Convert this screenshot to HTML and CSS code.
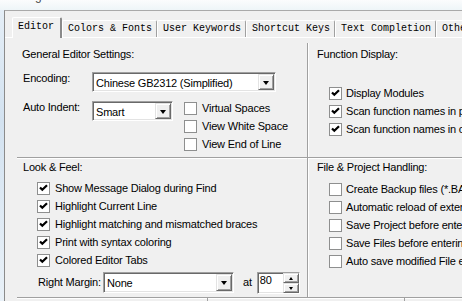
FILE: index.html
```html
<!DOCTYPE html>
<html lang="en">
<head>
    <meta charset="UTF-8">
    <title>Editor Options</title>
    <link rel="stylesheet" href="styles.css">
</head>
<body>
    <svg class="defs" width="0" height="0">
        <symbol id="box" viewBox="0 0 13 13">
            <rect x="0.5" y="0.5" width="12" height="12" fill="#fff" stroke="#8e8f8f"/>
        </symbol>
        <symbol id="tick" viewBox="0 0 13 13">
            <rect x="0.5" y="0.5" width="12" height="12" fill="#fff" stroke="#8e8f8f"/>
            <path d="M3 5.5L5.3 7.8L10 3.2" fill="none" stroke="#000" stroke-width="2.2"/>
        </symbol>
    </svg>
    <div class="glass"><span class="title">g</span></div>
    <div class="frame">
        <ul class="tabs">
            <li class="tab on">Editor</li>
            <li class="tab">Colors &amp; Fonts</li>
            <li class="tab">User Keywords</li>
            <li class="tab">Shortcut Keys</li>
            <li class="tab">Text Completion</li>
            <li class="tab">Other</li>
        </ul>
        <div class="page">
            <div class="general">
                <h3>General Editor Settings:</h3>
                <div class="line">
                    <span class="lbl">Encoding:</span>
                    <div class="field enc"><span class="val">Chinese GB2312 (Simplified)</span><span class="drop"></span></div>
                </div>
                <div class="line indent">
                    <span class="lbl">Auto Indent:</span>
                    <div class="field sm"><span class="val">Smart</span><span class="drop"></span></div>
                    <div class="checks side">
                        <label class="chk"><svg><use href="#box"/></svg>Virtual Spaces</label>
                        <label class="chk"><svg><use href="#box"/></svg>View White Space</label>
                        <label class="chk"><svg><use href="#box"/></svg>View End of Line</label>
                    </div>
                </div>
            </div>
            <div class="func">
                <h3>Function Display:</h3>
                <div class="checks list">
                    <label class="chk"><svg><use href="#tick"/></svg>Display Modules</label>
                    <label class="chk"><svg><use href="#tick"/></svg>Scan function names in project</label>
                    <label class="chk"><svg><use href="#tick"/></svg>Scan function names in current file</label>
                </div>
            </div>
            <div class="look">
                <h3>Look &amp; Feel:</h3>
                <div class="checks list">
                    <label class="chk"><svg><use href="#tick"/></svg>Show Message Dialog during Find</label>
                    <label class="chk"><svg><use href="#tick"/></svg>Highlight Current Line</label>
                    <label class="chk"><svg><use href="#tick"/></svg>Highlight matching and mismatched braces</label>
                    <label class="chk"><svg><use href="#tick"/></svg>Print with syntax coloring</label>
                    <label class="chk"><svg><use href="#tick"/></svg>Colored Editor Tabs</label>
                </div>
                <div class="margin">
                    <span class="lbl">Right Margin:</span>
                    <div class="field wide"><span class="val">None</span><span class="drop"></span></div>
                    <span class="at">at</span>
                    <div class="field spin">
                        <span class="val">80</span>
                        <span class="arrows"><span class="up"></span><span class="down"></span></span>
                    </div>
                </div>
            </div>
            <div class="file">
                <h3>File &amp; Project Handling:</h3>
                <div class="checks list">
                    <label class="chk"><svg><use href="#box"/></svg>Create Backup files (*.BAK)</label>
                    <label class="chk"><svg><use href="#box"/></svg>Automatic reload of externally modified files</label>
                    <label class="chk"><svg><use href="#box"/></svg>Save Project before entering Debug mode</label>
                    <label class="chk"><svg><use href="#box"/></svg>Save Files before entering Debug mode</label>
                    <label class="chk"><svg><use href="#box"/></svg>Auto save modified File every</label>
                </div>
            </div>
            <div class="next">
                <span class="cell one"></span>
                <span class="cell two"></span>
            </div>
        </div>
    </div>
</body>
</html>
```
FILE: styles.css
```css
*{
    margin: 0;
    padding: 0;
    box-sizing: border-box;
}
html,body{
    width: 462px;
    height: 301px;
    overflow: hidden;
}
body{
    background: linear-gradient(180deg,#e6eff7 0,#d3e2f0 40%,#e9f1f8 100%);
    font: 11px/13px "Liberation Sans", Arial, sans-serif;
    letter-spacing: -0.2px;
    color: #000;
    white-space: nowrap;
}
.defs{
    position: absolute;
}
.glass{
    height: 10px;
    overflow: hidden;
    padding-left: 35px;
    background: linear-gradient(180deg,#fbfcfd,#eef5f8);
}
.title{
    display: block;
    font-size: 12px;
    line-height: 12px;
    margin-top: -10px;
    color: #4a4a4a;
}
.frame{
    margin-left: 4px;
    height: 291px;
    border-left: 1px solid #8b8b8b;
    border-top: 1px solid #a9a9a9;
    background: #f0f0f0;
}
.tabs{
    display: flex;
    align-items: flex-end;
    list-style: none;
    height: 26px;
    padding: 6px 0 0 7px;
}
.tab{
    flex: none;
    height: 17px;
    padding: 0 4px 0 5px;
    border: 1px solid #fff;
    border-bottom: 0;
    border-right-color: #a0a0a0;
    border-radius: 2px 2px 0 0;
    font: 10px/15px "Liberation Mono", monospace;
    letter-spacing: 0;
}
.tab.on{
    height: 21px;
    margin-bottom: -1px;
    padding: 0 6px 0 5px;
    border-right: 2px solid #8a8a8a;
    background: #f0f0f0;
    line-height: 17px;
}
.page{
    height: 265px;
    border-top: 1px solid #fff;
    padding-left: 12px;
    display: grid;
    grid-template-columns: 290px 1fr;
    grid-template-rows: 119px 141px 1fr;
}
h3{
    font-weight: normal;
    font-size: 11px;
}
.general{
    padding: 10px 0 0 5px;
}
.line{
    display: flex;
    align-items: flex-start;
    margin-top: 11px;
    padding-left: 1px;
}
.line.indent{
    margin-top: 9px;
}
.lbl{
    width: 69px;
}
.field{
    display: flex;
    height: 20px;
    padding: 1px;
    background: #fff;
    border: 1px solid;
    border-color: #a0a0a0 #fff #fff #a0a0a0;
    box-shadow: inset 1px 1px #696969, inset -1px -1px #e3e3e3;
}
.val{
    flex: 1;
    padding: 3px 0 0 2px;
}
.enc{
    width: 184px;
}
.sm{
    width: 81px;
}
.drop{
    width: 16px;
    display: flex;
    align-items: center;
    justify-content: center;
    background: #f0f0f0;
    border: 1px solid;
    border-color: #e3e3e3 #696969 #696969 #e3e3e3;
    box-shadow: inset 1px 1px #fff, inset -1px -1px #a0a0a0;
}
.drop::after{
    content: "";
    border-top: 4px solid #000;
    border-left: 3.5px solid transparent;
    border-right: 3.5px solid transparent;
    margin-top: 1px;
}
.checks.side{
    margin: 1px 0 0 11px;
}
.chk{
    display: flex;
    gap: 5px;
    height: 18px;
}
.chk svg{
    flex: none;
    width: 13px;
    height: 13px;
}
.func{
    margin-top: 5px;
    padding: 5px 0 0 9px;
    border-left: 1px solid #a0a0a0;
    box-shadow: inset 1px 0 #fff;
}
.func .list{
    margin-top: 26px;
    padding-left: 12px;
}
.func .chk{
    gap: 4px;
}
.look{
    padding: 3px 0 0 6px;
    border-top: 1px solid #a0a0a0;
    border-bottom: 1px solid #a0a0a0;
    box-shadow: inset 0 1px #fff;
}
.look .list{
    margin-top: 8px;
    padding-left: 14px;
}
.margin{
    display: flex;
    align-items: center;
    margin-top: -2px;
    padding-left: 15px;
}
.margin .lbl{
    width: 65px;
}
.wide{
    width: 131px;
    height: 21px;
}
.at{
    margin: 0 5px 0 9px;
}
.spin{
    width: 43px;
    height: 22px;
    padding: 0;
    margin-top: 2px;
}
.spin .val{
    padding: 0 0 0 2px;
    line-height: 15px;
}
.arrows{
    width: 16px;
    display: flex;
    flex-direction: column;
}
.up,.down{
    flex: 1;
    display: flex;
    align-items: center;
    justify-content: center;
    background: #f0f0f0;
    border: 1px solid;
    border-color: #e3e3e3 #696969 #696969 #e3e3e3;
    box-shadow: inset 1px 1px #fff, inset -1px -1px #a0a0a0;
}
.up::after,.down::after{
    content: "";
    border-left: 2.5px solid transparent;
    border-right: 2.5px solid transparent;
}
.up::after{
    border-bottom: 3px solid #000;
}
.down::after{
    border-top: 3px solid #000;
}
.file{
    padding: 3px 0 0 9px;
    border-top: 1px solid #a0a0a0;
    border-bottom: 1px solid #a0a0a0;
    border-left: 1px solid #a0a0a0;
    box-shadow: inset 1px 1px #fff;
}
.file .list{
    margin-top: 9px;
    padding-left: 12px;
}
.file .chk{
    gap: 4px;
}
.next{
    grid-column: 1 / -1;
    display: flex;
    box-shadow: inset 0 1px #fff;
}
.cell{
    border-right: 1px solid #a0a0a0;
}
.one{
    width: 191px;
}
.two{
    width: 197px;
}
```
